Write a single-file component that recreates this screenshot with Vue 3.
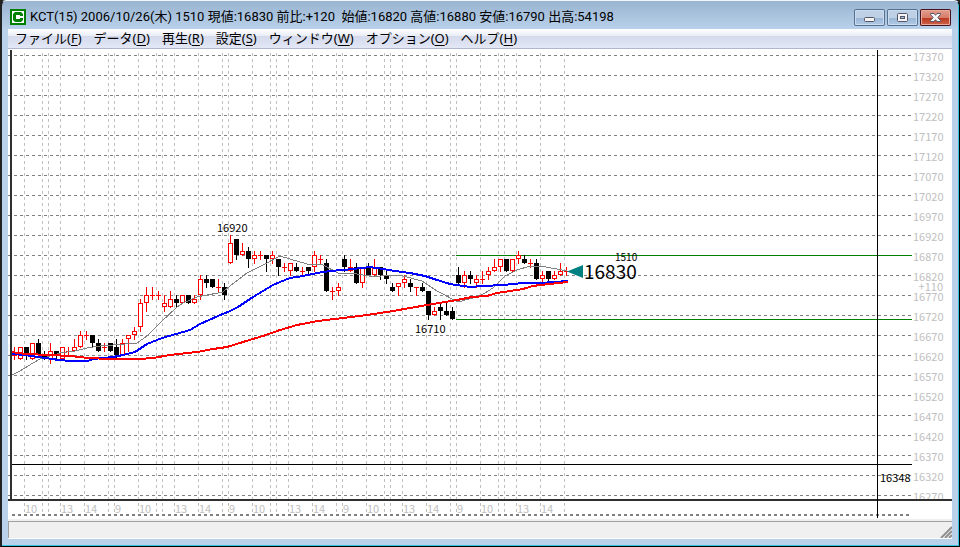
<script setup>
const menus = [
  ['ファイル', 'F'], ['データ', 'D'], ['再生', 'R'], ['設定', 'S'],
  ['ウィンドウ', 'W'], ['オプション', 'O'], ['ヘルプ', 'H'],
]

// Price rows, 50 yen apart, 20px each
const rows = Array.from({ length: 23 }, (_, i) => ({ y: 6 + i * 20, price: 17370 - i * 50 }))

// Session columns in chart coordinates; a label marks the hour
const columns = [
  [16, '10'], [34], [40], [52, '13'], [76, '14'], [100], [106, '9'],
  [130, '10'], [148], [154], [166, '13'], [190, '14'], [214], [220, '9'],
  [244, '10'], [262], [268], [280, '13'], [304, '14'], [328], [334, '9'],
  [358, '10'], [376], [382], [394, '13'], [418, '14'], [442], [448, '9'],
  [472, '10'], [490], [496], [508, '13'], [532, '14'], [556],
]

// Each bar: direction, body top, body bottom, high, low, in 10-yen steps below 16870
const bars = [
  ['u', 25, 25, 23, 26], ['u', 23, 26, 23, 26], ['d', 23, 25, 23, 26], ['u', 22, 26, 22, 26],
  ['d', 22, 25, 21, 25], ['d', 25, 26, 24, 26], ['u', 24, 26, 22, 27], ['d', 24, 25, 24, 26],
  ['u', 23, 26, 23, 26], ['u', 24, 24, 23, 25], ['u', 23, 24, 21, 24], ['u', 20, 23, 19, 23],
  ['u', 20, 20, 19, 21], ['d', 20, 22, 20, 23], ['d', 22, 24, 21, 24], ['u', 23, 23, 22, 24],
  ['d', 22, 24, 22, 24], ['d', 23, 25, 21, 26], ['u', 22, 25, 21, 25], ['u', 20, 21, 20, 24],
  ['u', 19, 20, 18, 21], ['u', 12, 18, 11, 19], ['u', 10, 12, 8, 14], ['u', 10, 10, 8, 11],
  ['u', 10, 10, 9, 11], ['u', 12, 13, 10, 14], ['u', 11, 13, 9, 13], ['d', 11, 12, 10, 13],
  ['u', 10, 12, 10, 12], ['d', 10, 12, 10, 12], ['u', 11, 12, 10, 12], ['u', 6, 10, 5, 11],
  ['d', 6, 7, 5, 8], ['d', 6, 8, 6, 8], ['u', 8, 8, 6, 9], ['d', 8, 10, 7, 11],
  ['u', -3, 2, -5, 2], ['d', -4, 0, -4, 1], ['u', -1, 0, -3, 0], ['d', -1, 1, -2, 3],
  ['u', 0, 1, -1, 2], ['u', 0, 0, -1, 1], ['d', 0, 1, 0, 4], ['u', 0, 1, -1, 2],
  ['d', 1, 3, 1, 5], ['u', 3, 3, 2, 4], ['u', 2, 4, 2, 5], ['d', 3, 4, 2, 4],
  ['u', 4, 4, 3, 5], ['d', 3, 4, 3, 5], ['u', 0, 3, -1, 4], ['u', 1, 1, 0, 2],
  ['d', 2, 9, 1, 9], ['u', 9, 9, 8, 11], ['u', 8, 9, 7, 10], ['d', 1, 3, 0, 4],
  ['u', 3, 4, 1, 4], ['d', 3, 7, 2, 7], ['u', 3, 7, 3, 8], ['d', 3, 5, 2, 5],
  ['u', 3, 5, 1, 5], ['d', 3, 5, 3, 6], ['d', 5, 6, 4, 7], ['d', 8, 9, 7, 9],
  ['u', 7, 8, 7, 10], ['u', 6, 7, 5, 8], ['d', 7, 8, 6, 9], ['u', 8, 8, 8, 10],
  ['d', 8, 9, 7, 9], ['d', 9, 15, 9, 16], ['u', 14, 15, 13, 15], ['d', 13, 14, 12, 16],
  ['d', 14, 15, 12, 15], ['d', 14, 16, 13, 16], ['d', 5, 7, 3, 7], ['u', 5, 7, 4, 8],
  ['d', 5, 6, 4, 7], ['u', 6, 7, 5, 8], ['u', 6, 6, 4, 7], ['u', 4, 5, 3, 6],
  ['u', 3, 4, 1, 4], ['u', 1, 3, 1, 4], ['d', 1, 4, 1, 4], ['u', 1, 4, 1, 4],
  ['u', 0, 1, -1, 2], ['d', 1, 2, 0, 2], ['u', 2, 2, 1, 3], ['d', 2, 6, 1, 6],
  ['u', 5, 6, 4, 7], ['d', 4, 6, 4, 7], ['u', 5, 6, 4, 6], ['u', 4, 5, 2, 5],
  ['u', 4, 4, 3, 5],
]
const level = (steps) => 206 + steps * 4
const candles = bars.map(([dir, top, bottom, high, low], i) => ({
  dir,
  x: 6 + i * 6,
  top: level(top),
  height: (bottom - top) * 4,
  high: level(high),
  low: level(low) + 1,
}))

const fast = '12,375 20,371 33,363 40,359 60,353 75,351 87,348 100,346 113,345 137,343 147,336 160,323 177,307 183,303 197,297 223,292 230,286 247,273 263,265 280,256 290,259 307,264 323,265 338,273 357,274 375,277 388,275 403,276 422,281 437,291 458,302 480,296 493,288 505,276 517,270 530,266 540,266 557,269 567,271'
const middle = '12,354 25,355 38,357 53,359 58,360 72,361 88,361 93,359 113,357 123,355 135,352 147,344 162,338 190,330 200,324 218,316 230,311 238,307 253,297 263,291 273,285 280,282 290,278 303,276 317,273 330,271 343,270 353,269 370,267 383,269 395,271 410,273 425,276 437,280 450,284 470,287 483,286 503,285 523,283 540,283 568,281'
const slow = '12,352 25,354 50,355 70,356 88,358 110,359 140,359 153,358 170,355 197,352 213,349 227,347 243,342 263,336 280,330 297,325 318,321 343,318 367,315 393,311 410,308 427,305 457,300 472,297 487,296 497,293 523,289 533,286 540,285 568,282'
</script>

<template>
  <main class="window">
    <header class="titlebar">
      <svg class="logo" width="16" height="16" viewBox="0 0 16 16" aria-hidden="true">
        <rect width="16" height="16" fill="#008000" />
        <rect x="2" y="2" width="12" height="12" fill="#fff" />
        <path d="M5 3H11L13 5V7H10V6H6V10H10V9H13V11L11 13H5L3 11V5Z" fill="#008000" />
        <path d="M8 7H10V9H8Z" fill="#fff" />
      </svg>
      <h1>KCT(15) 2006/10/26(木) 1510 現値:16830 前比:+120&nbsp; 始値:16820 高値:16880 安値:16790 出高:54198</h1>
      <div class="controls">
        <button type="button" aria-label="最小化">
          <svg width="31" height="17" viewBox="0 0 31 17"><rect x="10.5" y="8.500" width="10" height="4" rx="1" fill="#f4f4f4" stroke="#535666" /></svg>
        </button>
        <button type="button" aria-label="最大化">
          <svg width="31" height="17" viewBox="0 0 31 17"><rect x="10.500" y="4.500" width="10" height="8" rx="1" fill="#f4f4f4" stroke="#535666" /><rect x="13.500" y="7.500" width="4" height="2" fill="#a5bfdd" stroke="#535666" /></svg>
        </button>
        <button type="button" class="close" aria-label="閉じる">
          <svg width="31" height="17" viewBox="0 0 31 17"><path d="M10.500 4.500H14L15.500 6.300L17 4.500H20.500V5.500L17.800 8.500L20.500 11.500V12.500H17L15.500 10.700L14 12.500H10.500V11.500L13.200 8.500L10.500 5.500Z" fill="#f7f7f7" stroke="#535666" /></svg>
        </button>
      </div>
    </header>

    <div class="client">
      <nav class="menubar">
        <button v-for="[name, key] in menus" :key="key" type="button">{{ name }}(<u>{{ key }}</u>)</button>
      </nav>

      <section class="chart">
        <svg class="plot" height="470">
          <g class="grid">
            <line v-for="r in rows" :key="r.y" class="row" x1="0" x2="100%" :y1="r.y + 0.5" :y2="r.y + 0.5" />
            <line v-for="[x] in columns" :key="x" class="column" :x1="x + 0.5" :x2="x + 0.5" y1="4" y2="465" />
            <line class="base" x1="4" x2="100%" y1="466" y2="466" />
          </g>
          <g class="scale">
            <text v-for="[x, hour] in columns" :key="x" :x="x + 1" y="464">{{ hour }}</text>
          </g>

          <g class="range">
            <line x1="448" x2="100%" y1="206.5" y2="206.5" />
            <line x1="448" x2="100%" y1="270.5" y2="270.5" />
          </g>

          <g v-for="c in candles" :key="c.x" :class="['candle', c.dir]">
            <line :x1="c.x + 0.5" :x2="c.x + 0.5" :y1="c.high" :y2="c.low" />
            <rect v-if="c.height" :x="c.x - 1.5" :y="c.top + 0.5" width="4" :height="c.height - 1" />
            <line v-else :x1="c.x - 2" :x2="c.x + 3" :y1="c.top + 0.5" :y2="c.top + 0.5" />
          </g>

          <g class="averages" transform="translate(-8 -49)">
            <polyline class="fast" :points="fast" />
            <polyline class="middle" :points="middle" />
            <polyline class="slow" :points="slow" />
          </g>

          <g class="notes">
            <text x="209" y="183">16920</text>
            <text x="407" y="284">16710</text>
            <text class="time" x="607" y="212">1510</text>
            <text class="last" x="576" y="230">16830</text>
            <path d="M559 222.500L575 216V229Z" />
          </g>

          <line class="frame" x1="3" x2="3" y1="1" y2="451" />
          <line class="frame" x1="0" x2="100%" y1="451" y2="451" />
          <line class="cursor" x1="4" x2="100%" y1="415.5" y2="415.5" />
          <svg class="cursor-column" x="100%">
            <line class="cursor" x1="-34.5" x2="-34.5" y1="1" y2="469" />
            <text class="cursor-price" x="-32" y="433">16348</text>
          </svg>
        </svg>

        <svg class="prices" width="40" height="470">
          <g class="scale">
            <text v-for="r in rows" :key="r.y" x="1" :y="r.y + 6">{{ r.price }}</text>
            <text x="31" y="242" text-anchor="end">+110</text>
          </g>
          <rect y="451" width="40" height="19" fill="#fff" />
          <line class="frame" x1="0" x2="40" y1="451" y2="451" />
        </svg>
      </section>

      <footer class="status">
        <svg width="12" height="12" viewBox="0 0 12 12" aria-hidden="true">
          <path d="M1 12L12 1M5 12L12 5M9 12L12 9" stroke="#8f8f8f" stroke-width="2" />
        </svg>
      </footer>
    </div>
  </main>
</template>

<style>
body {
  background: #222;
}
</style>

<style scoped>
.window {
  box-sizing: border-box;
  min-height: 100vh;
  display: flex;
  flex-direction: column;
  padding: 0 7px 7px 6px;
  border: 1px solid #000;
  border-top-color: #f2f6fa;
  border-left: 2px solid #222;
  border-radius: 6px 6px 0 0;
  box-shadow: inset -1px -1px 0 #35c3e0;
  background: linear-gradient(#99b4d1, #b9d1ea 28px);
  font-family: "Noto Sans", "Noto Sans CJK JP", sans-serif;
  font-size: 13px;
  color: #000;
}
.titlebar {
  display: flex;
  align-items: center;
  height: 28px;
  padding: 4px 1px 0;
  box-sizing: border-box;
}
.logo {
  flex: none;
  margin: 0 4px 0 1px;
}
h1 {
  flex: 1;
  margin: 0;
  font-family: Roboto, "Noto Sans CJK JP", sans-serif;
  font-size: 13px;
  font-weight: 400;
  line-height: 18px;
  white-space: nowrap;
}
.controls {
  display: flex;
  gap: 2px;
}
.controls button {
  display: flex;
  padding: 0;
  border: 0;
  border-radius: 2px;
  box-shadow: inset 0 0 0 1px #56708f, inset 0 0 0 2px #c9dcf0;
  background: linear-gradient(#bdd0e6 50%, #98b4d4 50%, #b4cde8);
}
.controls .close {
  box-shadow: inset 0 0 0 1px #431420, inset 0 0 0 2px #e9a99b;
  background: linear-gradient(#e3a092, #d77d6b 50%, #b8351c 50%, #d06a50);
}
.client {
  flex: 1;
  display: flex;
  flex-direction: column;
  background: #fff;
}
.menubar {
  display: flex;
  gap: 12px;
  height: 20px;
  box-sizing: border-box;
  padding: 0 7px;
  border-bottom: 1px solid #b0b7cd;
  background: linear-gradient(#fff, #e8ecf5 7px, #d4daec 7px, #e3e7f6);
}
.menubar button {
  padding: 0;
  border: 0;
  background: none;
  font: inherit;
  line-height: 19px;
  color: inherit;
  white-space: nowrap;
}
.menubar u {
  text-underline-offset: 2px;
}
.chart {
  flex: 1;
  display: flex;
  background: #fff;
}
.plot {
  flex: 1;
  min-width: 0;
}
.prices {
  flex: none;
}
.chart line,
.chart polyline,
.chart rect {
  shape-rendering: crispEdges;
}
.chart text {
  font-family: "Noto Sans CJK JP", sans-serif;
  font-size: 11px;
}
.grid line {
  stroke-dasharray: 3 3;
}
.grid .row {
  stroke: #808080;
}
.grid .column {
  stroke: #c0c0c0;
}
.grid .base {
  stroke: #808080;
  stroke-width: 2;
}
.scale {
  fill: #c0c0c0;
}
.range {
  stroke: #008000;
}
.candle line {
  stroke-width: 1;
}
.candle.u {
  stroke: #f00;
  fill: #fff;
}
.candle.d {
  stroke: #000;
  fill: #000;
}
.averages {
  fill: none;
}
.fast {
  stroke: #808080;
}
.middle {
  stroke: #00f;
  stroke-width: 2;
}
.slow {
  stroke: #f00;
  stroke-width: 2;
}
.notes path {
  fill: #008080;
}
.chart .time {
  font-size: 10px;
}
.chart .last {
  font-size: 19px;
}
.frame {
  stroke: #303030;
  stroke-width: 2;
}
.cursor {
  stroke: #000;
}
.cursor-column {
  overflow: visible;
}
.status {
  box-sizing: border-box;
  height: 20px;
  display: flex;
  justify-content: flex-end;
  align-items: flex-end;
  border-top: 2px solid #f0f0f0;
  border-bottom: 1px solid #fff;
  background: #f0f0f0;
  box-shadow: inset 1px 1px 0 #a0a0a0;
}
</style>
